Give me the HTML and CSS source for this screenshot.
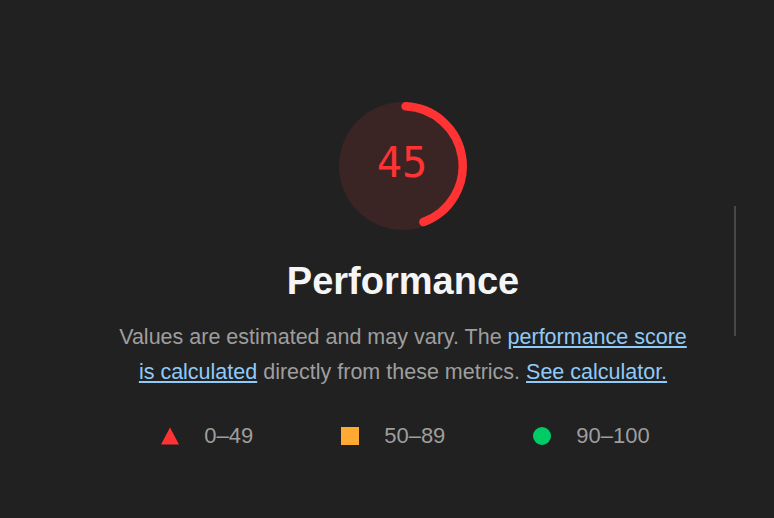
FILE: index.html
```html
<!DOCTYPE html>
<html lang="en">
<head>
<meta charset="utf-8">
<title>Performance</title>
<link rel="stylesheet" href="styles.css">
</head>
<body>
<div class="page">
  <div class="gauge">
    <svg class="gauge-svg" width="128" height="128" viewBox="0 0 128 128">
      <circle cx="64" cy="64" r="64" fill="#3b2424"/>
      <path d="M66.6 4.36 A59.7 59.7 0 0 1 84.42 120.1" fill="none" stroke="#ff3333" stroke-width="8.5" stroke-linecap="round"/>
    </svg>
    <div class="gauge-value">45</div>
  </div>
  <h1 class="title">Performance</h1>
  <p class="desc">Values are estimated and may vary. The <a href="#" class="link">performance score</a><br><a href="#" class="link">is calculated</a> directly from these metrics. <a href="#" class="link">See calculator.</a></p>
  <div class="legend">
    <div class="legend-item">
      <svg class="legend-icon" width="18" height="18" viewBox="0 0 18 18"><polygon points="9,0.5 18,17.5 0,17.5" fill="#ff3333"/></svg>
      <span>0–49</span>
    </div>
    <div class="legend-item">
      <span class="legend-icon square"></span>
      <span>50–89</span>
    </div>
    <div class="legend-item">
      <span class="legend-icon circle"></span>
      <span>90–100</span>
    </div>
  </div>
</div>
<div class="scroll-thumb"></div>
</body>
</html>
```

FILE: styles.css
```css
html, body {
  margin: 0;
  padding: 0;
  background: #212121;
  height: 100%;
}
body {
  font-family: "Liberation Sans", Arial, Helvetica, sans-serif;
  overflow: hidden;
}
.page {
  display: flex;
  flex-direction: column;
  align-items: center;
  padding: 102px 0 0 32px;
}
.gauge {
  position: relative;
  width: 128px;
  height: 128px;
}
.gauge-svg {
  display: block;
}
.gauge-value {
  position: absolute;
  inset: 0;
  display: flex;
  align-items: center;
  justify-content: center;
  padding: 0 2px 7px 0;
  font-family: "DejaVu Sans Mono", Menlo, monospace;
  font-size: 42px;
  color: #ff3333;
}
.title {
  margin: 29px 0 0;
  font-size: 38px;
  line-height: 44px;
  font-weight: 700;
  color: #f5f5f5;
}
.desc {
  margin: 17px 0 0;
  max-width: 600px;
  text-align: center;
  font-size: 21.5px;
  line-height: 35px;
  color: #9e9e9e;
}
.link {
  color: #90caf9;
  text-decoration: underline;
}
.legend {
  display: flex;
  align-items: center;
  gap: 88px;
  margin-top: 34px;
  padding-left: 5px;
  font-size: 22px;
  line-height: 24px;
  color: #9e9e9e;
}
.legend-item {
  display: flex;
  align-items: center;
  gap: 25px;
}
.legend-icon {
  display: block;
  width: 18px;
  height: 18px;
  flex: none;
}
.square {
  background: #ffaa33;
}
.circle {
  background: #00cc66;
  border-radius: 50%;
}
.scroll-thumb {
  position: absolute;
  left: 734px;
  top: 206px;
  width: 2px;
  height: 130px;
  background: #484848;
}
```
